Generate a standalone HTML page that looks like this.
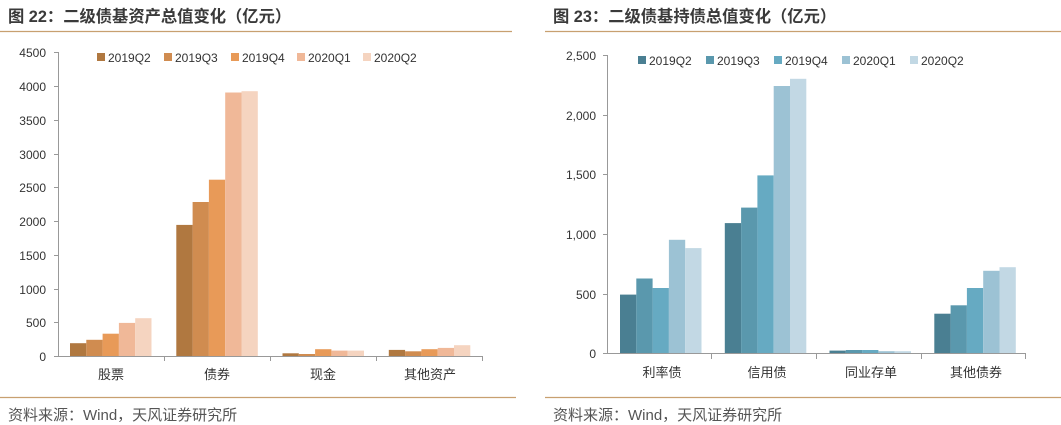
<!DOCTYPE html>
<html><head><meta charset="utf-8"><style>
body{margin:0;background:#fff;width:1061px;height:425px;overflow:hidden}
svg{display:block;font-family:"Liberation Sans","Noto Sans CJK SC",sans-serif}
</style></head><body>
<svg width="1061" height="425" viewBox="0 0 1061 425">
<g font-size="16.3" font-weight="bold" fill="#3a3a3a">
<text x="8" y="22">图 22：二级债基资产总值变化（亿元）</text>
<text x="553" y="22">图 23：二级债基持债总值变化（亿元）</text>
</g>
<line x1="0" y1="31.5" x2="512" y2="31.5" stroke="#c8a070" stroke-width="1.2"/>
<line x1="545" y1="31.5" x2="1061" y2="31.5" stroke="#c8a070" stroke-width="1.2"/>
<line x1="0" y1="397.5" x2="516" y2="397.5" stroke="#c8a070" stroke-width="1.2"/>
<line x1="545" y1="397.5" x2="1061" y2="397.5" stroke="#c8a070" stroke-width="1.2"/>
<g font-size="15" fill="#555">
<text x="8" y="420">资料来源：Wind，天风证券研究所</text>
<text x="553" y="420">资料来源：Wind，天风证券研究所</text>
</g>

<!-- LEFT CHART -->
<g stroke="#999" stroke-width="1">
<line x1="58.5" y1="52" x2="58.5" y2="357"/>
<line x1="58" y1="356.5" x2="483" y2="356.5"/>
<line x1="54" y1="52.5" x2="58" y2="52.5"/><line x1="54" y1="86.5" x2="58" y2="86.5"/><line x1="54" y1="120.5" x2="58" y2="120.5"/><line x1="54" y1="154.5" x2="58" y2="154.5"/><line x1="54" y1="187.5" x2="58" y2="187.5"/><line x1="54" y1="221.5" x2="58" y2="221.5"/><line x1="54" y1="255.5" x2="58" y2="255.5"/><line x1="54" y1="289.5" x2="58" y2="289.5"/><line x1="54" y1="322.5" x2="58" y2="322.5"/><line x1="54" y1="356.5" x2="58" y2="356.5"/>
<line x1="164.5" y1="356" x2="164.5" y2="361"/><line x1="270.5" y1="356" x2="270.5" y2="361"/><line x1="376.5" y1="356" x2="376.5" y2="361"/><line x1="482.5" y1="356" x2="482.5" y2="361"/>
</g>
<g font-size="12" fill="#333" text-anchor="end">
<text x="46" y="57">4500</text><text x="46" y="91">4000</text><text x="46" y="125">3500</text><text x="46" y="159">3000</text><text x="46" y="192">2500</text><text x="46" y="226">2000</text><text x="46" y="260">1500</text><text x="46" y="294">1000</text><text x="46" y="327">500</text><text x="46" y="361">0</text>
</g>
<g font-size="13" fill="#333" text-anchor="middle">
<text x="111" y="379">股票</text><text x="217" y="379">债券</text><text x="323" y="379">现金</text><text x="430" y="379">其他资产</text>
</g>
<g font-size="12" fill="#333">
<rect x="97" y="53" width="8" height="8" fill="#b07840"/><text x="108" y="62">2019Q2</text>
<rect x="164" y="53" width="8" height="8" fill="#d08c50"/><text x="175" y="62">2019Q3</text>
<rect x="231" y="53" width="8" height="8" fill="#e89a58"/><text x="242" y="62">2019Q4</text>
<rect x="297" y="53" width="8" height="8" fill="#f0b898"/><text x="308" y="62">2020Q1</text>
<rect x="363" y="53" width="8" height="8" fill="#f5d4c0"/><text x="374" y="62">2020Q2</text>
</g>
<g>
<rect x="70" y="343.2" width="16.3" height="12.8" fill="#b07840"/>
<rect x="86.3" y="339.8" width="16.3" height="16.2" fill="#d08c50"/>
<rect x="102.6" y="333.7" width="16.3" height="22.3" fill="#e89a58"/>
<rect x="118.9" y="322.9" width="16.3" height="33.1" fill="#f0b898"/>
<rect x="135.2" y="318.2" width="16.3" height="37.8" fill="#f5d4c0"/>
<rect x="176.3" y="224.9" width="16.3" height="131.1" fill="#b07840"/>
<rect x="192.6" y="202" width="16.3" height="154" fill="#d08c50"/>
<rect x="208.9" y="179.7" width="16.3" height="176.3" fill="#e89a58"/>
<rect x="225.2" y="92.5" width="16.3" height="263.5" fill="#f0b898"/>
<rect x="241.5" y="91.2" width="16.3" height="264.8" fill="#f5d4c0"/>
<rect x="282.5" y="353.3" width="16.3" height="2.7" fill="#b07840"/>
<rect x="298.8" y="354" width="16.3" height="2" fill="#d08c50"/>
<rect x="315.1" y="349.2" width="16.3" height="6.8" fill="#e89a58"/>
<rect x="331.4" y="350.6" width="16.3" height="5.4" fill="#f0b898"/>
<rect x="347.7" y="350.6" width="16.3" height="5.4" fill="#f5d4c0"/>
<rect x="388.8" y="349.9" width="16.3" height="6.1" fill="#b07840"/>
<rect x="405.1" y="351.3" width="16.3" height="4.7" fill="#d08c50"/>
<rect x="421.4" y="349.2" width="16.3" height="6.8" fill="#e89a58"/>
<rect x="437.7" y="347.9" width="16.3" height="8.1" fill="#f0b898"/>
<rect x="454" y="345.2" width="16.3" height="10.8" fill="#f5d4c0"/>
</g>

<!-- RIGHT CHART -->
<g stroke="#999" stroke-width="1">
<line x1="607.5" y1="55" x2="607.5" y2="354"/>
<line x1="607" y1="353.5" x2="1026" y2="353.5"/>
<line x1="603" y1="55.5" x2="607" y2="55.5"/><line x1="603" y1="115.5" x2="607" y2="115.5"/><line x1="603" y1="174.5" x2="607" y2="174.5"/><line x1="603" y1="234.5" x2="607" y2="234.5"/><line x1="603" y1="294.5" x2="607" y2="294.5"/><line x1="603" y1="353.5" x2="607" y2="353.5"/>
<line x1="711.5" y1="353" x2="711.5" y2="359"/><line x1="816.5" y1="353" x2="816.5" y2="359"/><line x1="921.5" y1="353" x2="921.5" y2="359"/><line x1="1025.5" y1="353" x2="1025.5" y2="359"/>
</g>
<g font-size="12" fill="#333" text-anchor="end">
<text x="596" y="60">2,500</text><text x="596" y="120">2,000</text><text x="596" y="179">1,500</text><text x="596" y="239">1,000</text><text x="596" y="299">500</text><text x="596" y="358">0</text>
</g>
<g font-size="13" fill="#333" text-anchor="middle">
<text x="662" y="377">利率债</text><text x="767" y="377">信用债</text><text x="871" y="377">同业存单</text><text x="976" y="377">其他债券</text>
</g>
<g font-size="12" fill="#333">
<rect x="638" y="56" width="8" height="8" fill="#4a7f92"/><text x="649" y="65">2019Q2</text>
<rect x="706" y="56" width="8" height="8" fill="#5a98ad"/><text x="717" y="65">2019Q3</text>
<rect x="774" y="56" width="8" height="8" fill="#66aac2"/><text x="785" y="65">2019Q4</text>
<rect x="842" y="56" width="8" height="8" fill="#9cc2d4"/><text x="853" y="65">2020Q1</text>
<rect x="910" y="56" width="8" height="8" fill="#c2d8e4"/><text x="921" y="65">2020Q2</text>
</g>
<g>
<rect x="620" y="294.6" width="16.3" height="58.4" fill="#4a7f92"/>
<rect x="636.3" y="278.5" width="16.3" height="74.5" fill="#5a98ad"/>
<rect x="652.6" y="288" width="16.3" height="65" fill="#66aac2"/>
<rect x="668.9" y="239.8" width="16.3" height="113.2" fill="#9cc2d4"/>
<rect x="685.2" y="248.1" width="16.3" height="104.9" fill="#c2d8e4"/>
<rect x="724.8" y="223.1" width="16.3" height="129.9" fill="#4a7f92"/>
<rect x="741.1" y="207.6" width="16.3" height="145.4" fill="#5a98ad"/>
<rect x="757.4" y="175.4" width="16.3" height="177.6" fill="#66aac2"/>
<rect x="773.7" y="86" width="16.3" height="267" fill="#9cc2d4"/>
<rect x="790" y="78.8" width="16.3" height="274.2" fill="#c2d8e4"/>
<rect x="829.5" y="350.6" width="16.3" height="2.4" fill="#4a7f92"/>
<rect x="845.8" y="350" width="16.3" height="3" fill="#5a98ad"/>
<rect x="862.1" y="350" width="16.3" height="3" fill="#66aac2"/>
<rect x="878.4" y="351.2" width="16.3" height="1.8" fill="#9cc2d4"/>
<rect x="894.7" y="351.2" width="16.3" height="1.8" fill="#c2d8e4"/>
<rect x="934.3" y="313.7" width="16.3" height="39.3" fill="#4a7f92"/>
<rect x="950.6" y="305.3" width="16.3" height="47.7" fill="#5a98ad"/>
<rect x="966.9" y="288" width="16.3" height="65" fill="#66aac2"/>
<rect x="983.2" y="270.8" width="16.3" height="82.2" fill="#9cc2d4"/>
<rect x="999.5" y="267.2" width="16.3" height="85.8" fill="#c2d8e4"/>
</g>
</svg>
</body></html>
